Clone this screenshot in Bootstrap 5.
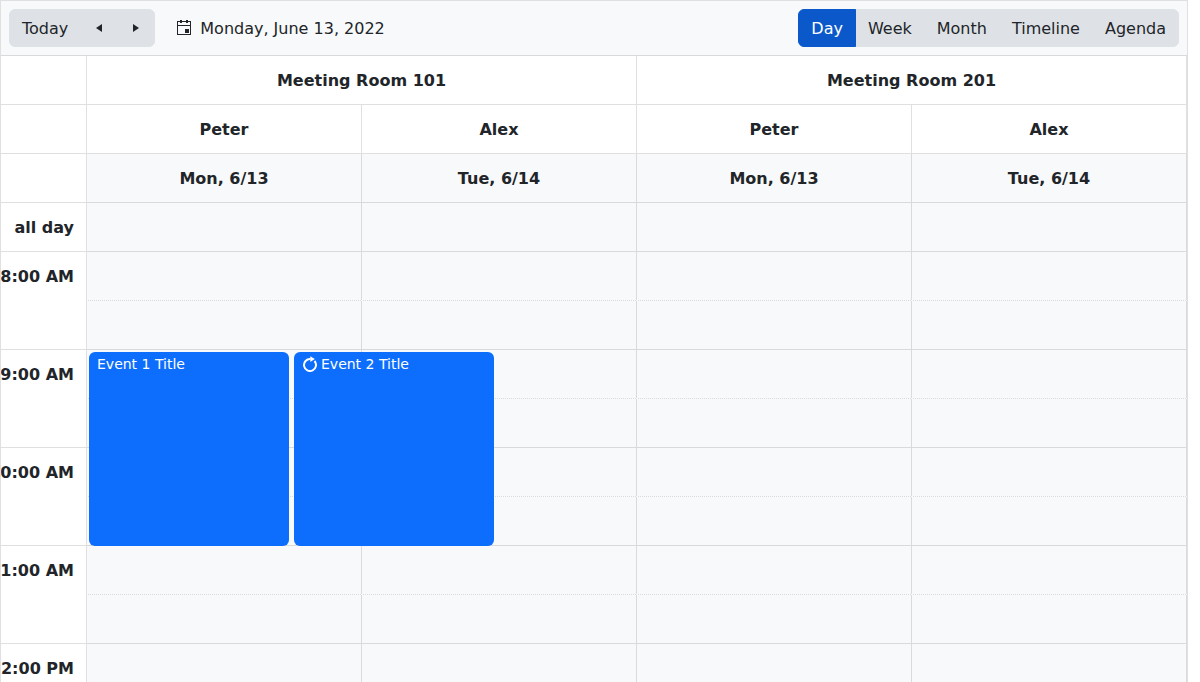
<!DOCTYPE html>
<html lang="en">
<head>
<meta charset="utf-8">
<meta name="viewport" content="width=device-width, initial-scale=1">
<title>Scheduler</title>
<link rel="stylesheet" href="https://cdn.jsdelivr.net/npm/bootstrap@5.3.0/dist/css/bootstrap.min.css">
<style>
  :root { --line: rgba(33, 37, 41, .14); }
  body { font-family: "DejaVu Sans", sans-serif; color: #212529; height: 100vh; overflow: hidden; }
  .scheduler { width: 1188px; height: 100vh; border: 1px solid var(--line); border-bottom: 0; }
  .toolbar { height: 55px; border-bottom: 1px solid var(--line); }
  .btn-soft { --bs-btn-bg: #dee2e6; --bs-btn-border-color: #dee2e6; --bs-btn-color: #212529;
    --bs-btn-hover-bg: #d3d7db; --bs-btn-hover-border-color: #d3d7db;
    --bs-btn-active-bg: #0a58ca; --bs-btn-active-border-color: #0a58ca; --bs-btn-active-color: #fff;
    padding: 7px 12px 5px; }
  .btn-arrow { width: 38px; padding: 0; display: flex; align-items: center; justify-content: center; }
  .date-label { margin-left: 21px; gap: 8px; }
  .date-label span { padding-top: 2px; }
  .slot-row { height: 49px; }
  .hour-row { height: 98px; }
  .time-head { width: 86px; flex: none; overflow: hidden; white-space: nowrap; padding: 13px 12px 0 0;
    border-right: 1px solid var(--line); border-bottom: 1px solid var(--line); }
  .slot { flex: 1 1 0; height: 49px; padding-top: 13px; border-right: 1px solid var(--line); border-bottom: 1px solid var(--line); }
  .slot-half { border: 0;
    background-image: repeating-linear-gradient(90deg, transparent 0 1px, var(--line) 1px 2px), linear-gradient(var(--line), var(--line));
    background-size: 100% 1px, 1px 48px; background-position: left bottom, right top; background-repeat: no-repeat; }
  .event { top: 2px; width: 200px; height: 194px; padding: 2px 8px; border-radius: 6px; font-size: 14px; line-height: 21px; }
</style>
</head>
<body>
<div class="scheduler overflow-hidden">
  <div class="toolbar d-flex align-items-center justify-content-between bg-light p-2">
    <div class="d-flex align-items-center">
      <div class="btn-group">
        <button class="btn btn-soft">Today</button>
        <button class="btn btn-soft btn-arrow" aria-label="Previous"><svg width="6" height="8" viewBox="0 0 6 8" fill="currentColor"><path d="M6 0v8L0 4z"/></svg></button>
        <button class="btn btn-soft btn-arrow" aria-label="Next"><svg width="6" height="8" viewBox="0 0 6 8" fill="currentColor"><path d="M0 0v8l6-4z"/></svg></button>
      </div>
      <div class="d-flex align-items-center date-label">
        <svg width="16" height="16" viewBox="0 0 16 16" fill="currentColor"><path fill-rule="evenodd" d="M4 1V0h2v1h4V0h2v1h3v14H1V1zM2 2v3h12V2h-2v1h-2V2H6v1H4V2zM2 6v8h12V6zM9 9h4v4H9z"/></svg>
        <span>Monday, June 13, 2022</span>
      </div>
    </div>
    <div class="btn-group">
      <button class="btn btn-soft active">Day</button>
      <button class="btn btn-soft">Week</button>
      <button class="btn btn-soft">Month</button>
      <button class="btn btn-soft">Timeline</button>
      <button class="btn btn-soft">Agenda</button>
    </div>
  </div>

  <div class="slot-row d-flex text-center fw-bold">
    <div class="time-head"></div><div class="slot">Meeting Room 101</div><div class="slot">Meeting Room 201</div>
  </div>
  <div class="slot-row d-flex text-center fw-bold">
    <div class="time-head"></div><div class="slot">Peter</div><div class="slot">Alex</div><div class="slot">Peter</div><div class="slot">Alex</div>
  </div>
  <div class="slot-row d-flex text-center fw-bold">
    <div class="time-head"></div><div class="slot bg-light">Mon, 6/13</div><div class="slot bg-light">Tue, 6/14</div><div class="slot bg-light">Mon, 6/13</div><div class="slot bg-light">Tue, 6/14</div>
  </div>
  <div class="slot-row d-flex">
    <div class="time-head d-flex justify-content-end fw-bold">all day</div><div class="slot bg-light"></div><div class="slot bg-light"></div><div class="slot bg-light"></div><div class="slot bg-light"></div>
  </div>

  <div id="hours"></div>
</div>

<template id="hour">
  <div class="hour-row d-flex position-relative">
    <div class="time-head d-flex justify-content-end fw-bold"></div>
    <div class="flex-grow-1">
      <div class="d-flex"><div class="slot slot-half bg-light"></div><div class="slot slot-half bg-light"></div><div class="slot slot-half bg-light"></div><div class="slot slot-half bg-light"></div></div>
      <div class="d-flex"><div class="slot bg-light"></div><div class="slot bg-light"></div><div class="slot bg-light"></div><div class="slot bg-light"></div></div>
    </div>
  </div>
</template>
<template id="events">
  <div class="event position-absolute z-1 bg-primary text-white" style="left:88px">Event 1 Title</div>
  <div class="event position-absolute z-1 bg-primary text-white d-flex" style="left:293px">
    <svg class="flex-shrink-0" style="margin:2px 3px 0 0" width="16" height="16" viewBox="0 0 16 16" fill="none"><path d="M8.500 3A6 6 0 1 0 12.500 5" stroke="currentColor" stroke-width="2"/><path d="M8.300 .2L12.800 3 8.300 6z" fill="currentColor"/></svg>
    <span>Event 2 Title</span>
  </div>
</template>
<script src="https://cdn.jsdelivr.net/npm/bootstrap@5.3.0/dist/js/bootstrap.bundle.min.js"></script>
<script>
  const hours = document.getElementById('hours');
  for (const label of ['8:00 AM', '9:00 AM', '10:00 AM', '11:00 AM', '12:00 PM']) {
    const row = document.getElementById('hour').content.cloneNode(true).firstElementChild;
    row.querySelector('.time-head').textContent = label;
    if (label === '9:00 AM') row.append(document.getElementById('events').content.cloneNode(true));
    hours.append(row);
  }
</script>
</body>
</html>
